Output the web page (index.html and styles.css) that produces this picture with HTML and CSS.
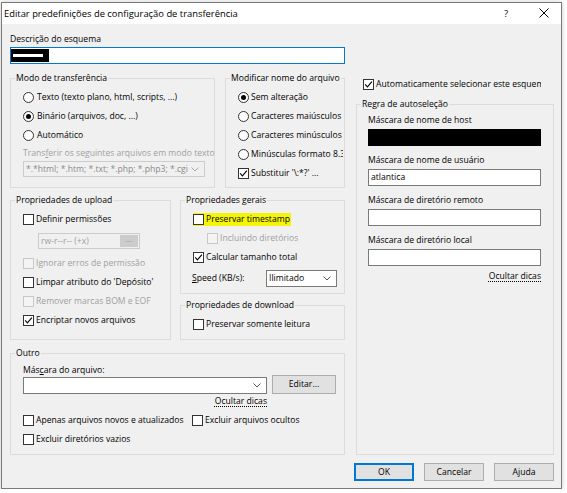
FILE: index.html
```html
<!DOCTYPE html>
<html lang="pt-BR">
<head>
<meta charset="utf-8">
<title>Editar predefinições de configuração de transferência</title>
<link rel="stylesheet" href="styles.css">
</head>
<body>
<div class="window">
  <div class="titlebar">
    <span class="title">Editar predefinições de configuração de transferência</span>
    <span class="help">?</span>
    <svg class="close" width="10" height="10" viewBox="0 0 10 10"><path d="M0.5 0.5L9.5 9.5M9.5 0.5L0.5 9.5" stroke="#000" stroke-width="1" fill="none"/></svg>
  </div>
  <div class="client">
    <div class="main">
      <div class="left">
        <div class="lbl">Descrição do esquema</div>
        <div class="field focus"><span class="redact"><span class="redact-bar"></span></span></div>

        <div class="row1">
          <fieldset class="grp modo">
            <legend>Modo de transferência</legend>
            <div class="gb">
              <div class="opt"><span class="radio"></span>Texto (texto plano, html, scripts, ...)</div>
              <div class="opt"><span class="radio on"></span>Binário (arquivos, doc, ...)</div>
              <div class="opt"><span class="radio"></span>Automático</div>
              <div class="lbl dis sub">Trans<u>f</u>erir os seguintes arquivos em modo texto</div>
              <div class="combo dis">
                <span class="ctext">*.*html; *.htm; *.txt; *.php; *.php3; *.cgi; *.c; *.cpp</span>
                <svg class="chev" width="8" height="5" viewBox="0 0 8 5"><polyline points="0.5,0.5 4,4 7.5,0.5" fill="none" stroke="#a8a8a8" stroke-width="1"/></svg>
              </div>
            </div>
          </fieldset>
          <fieldset class="grp nome">
            <legend>Modificar nome do arquivo</legend>
            <div class="gb">
              <div class="opt"><span class="radio on"></span>Sem alteração</div>
              <div class="opt"><span class="radio"></span>Caracteres maiúsculos</div>
              <div class="opt"><span class="radio"></span>Caracteres minúsculos</div>
              <div class="opt"><span class="radio"></span>Minúsculas formato 8.3</div>
              <div class="opt"><span class="cb"><svg width="9" height="9" viewBox="0 0 9 9"><polyline points="1.2,4.4 3.4,6.8 7.9,1.6" fill="none" stroke="#000" stroke-width="1.1"/></svg></span>Substituir '\:*?' ...</div>
            </div>
          </fieldset>
        </div>

        <div class="row2">
          <fieldset class="grp upload">
            <legend>Propriedades de upload</legend>
            <div class="gb">
              <div class="opt"><span class="cb"></span>Definir permissões</div>
              <div class="perm"><span class="ptext">rw-r--r-- (+x)</span><span class="dots">...</span></div>
              <div class="opt dis first-after"><span class="cb dis"></span>Ignorar erros de permissão</div>
              <div class="opt"><span class="cb"></span>Limpar atributo do 'Depósito'</div>
              <div class="opt dis"><span class="cb dis"></span>Remover marcas BOM e EOF</div>
              <div class="opt"><span class="cb"><svg width="9" height="9" viewBox="0 0 9 9"><polyline points="1.2,4.4 3.4,6.8 7.9,1.6" fill="none" stroke="#000" stroke-width="1.1"/></svg></span>Encriptar novos arquivos</div>
            </div>
          </fieldset>
          <div class="col2">
            <fieldset class="grp gerais">
              <legend>Propriedades gerais</legend>
              <div class="gb">
                <div class="opt"><span class="hl"><span class="cb"></span>Preservar timestamp</span></div>
                <div class="opt dis indent"><span class="cb dis"></span>Incluindo diretórios</div>
                <div class="opt"><span class="cb"><svg width="9" height="9" viewBox="0 0 9 9"><polyline points="1.2,4.4 3.4,6.8 7.9,1.6" fill="none" stroke="#000" stroke-width="1.1"/></svg></span>Calcular tamanho total</div>
                <div class="speedrow">
                  <span class="sl"><u>S</u>peed (KB/s):</span>
                  <span class="sel"><span class="ctext">Ilimitado</span><svg class="chev" width="8" height="5" viewBox="0 0 8 5"><polyline points="0.5,0.5 4,4 7.5,0.5" fill="none" stroke="#555" stroke-width="1"/></svg></span>
                </div>
              </div>
            </fieldset>
            <fieldset class="grp download">
              <legend>Propriedades de download</legend>
              <div class="gb">
                <div class="opt"><span class="cb"></span>Preservar somente leitura</div>
              </div>
            </fieldset>
          </div>
        </div>

        <fieldset class="grp outro">
          <legend>Outro</legend>
          <div class="gb">
            <div class="lbl">Más<u>c</u>ara do arquivo:</div>
            <div class="comborow">
              <span class="combo2"><svg class="chev" width="8" height="5" viewBox="0 0 8 5"><polyline points="0.5,0.5 4,4 7.5,0.5" fill="none" stroke="#555" stroke-width="1"/></svg></span>
              <span class="btn edit">Editar...</span>
            </div>
            <div class="hint"><span>Ocultar dicas</span></div>
            <div class="checks">
              <div class="opt"><span class="cb"></span>Apenas arquivos novos e atualizados</div>
              <div class="opt"><span class="cb"></span>Excluir arquivos ocultos</div>
              <div class="opt"><span class="cb"></span>Excluir diretórios vazios</div>
            </div>
          </div>
        </fieldset>
      </div>

      <div class="right">
        <div class="opt autorow"><span class="cb"><svg width="9" height="9" viewBox="0 0 9 9"><polyline points="1.2,4.4 3.4,6.8 7.9,1.6" fill="none" stroke="#000" stroke-width="1.1"/></svg></span>Automaticamente selecionar este esquema</div>
        <fieldset class="grp regra">
          <legend>Regra de autoseleção</legend>
          <div class="gb">
            <div class="lbl">Máscara de nome de host</div>
            <div class="field black"></div>
            <div class="lbl gap">Máscara de nome de usuário</div>
            <div class="field"><span class="val">atlantica</span></div>
            <div class="lbl gap">Máscara de diretório remoto</div>
            <div class="field"></div>
            <div class="lbl gap">Máscara de diretório local</div>
            <div class="field"></div>
            <div class="hint hint-r"><span>Ocultar dicas</span></div>
          </div>
        </fieldset>
      </div>
    </div>

    <div class="footer">
      <span class="btn ok">OK</span>
      <span class="btn">Cancelar</span>
      <span class="btn">Ajuda</span>
    </div>
  </div>
</div>
</body>
</html>
```

FILE: styles.css
```css
* { box-sizing: border-box; }
html, body { margin: 0; padding: 0; }
body {
  background: #ffffff;
  font-family: "Open Sans", "Noto Sans", sans-serif;
  font-size: 8.6px;
  line-height: 13px;
  color: #000;
}
u { text-decoration-thickness: 1px; text-underline-offset: 1px; }

.window {
  margin: 2px 0 0 1px;
  width: 561px;
  border: 1px solid #7a7a7a;
  background: #f0f0f0;
  box-shadow: 0 0 5px rgba(0, 0, 0, 0.22);
}
.titlebar {
  height: 21px;
  background: #fff;
  display: flex;
  align-items: center;
  padding: 0 0 1px 2px;
}
.title { flex: 1; font-size: 9.4px; white-space: nowrap; }
.help { width: 14px; text-align: center; font-size: 9.5px; margin-right: 26px; }
.close { flex: none; margin-right: 12px; }

.client { padding: 9px 7px 7px 8px; }
.main { display: grid; grid-template-columns: 335px 198px; column-gap: 11px; }
.left { display: flex; flex-direction: column; }
.right { display: flex; flex-direction: column; padding-top: 42px; }

.lbl { height: 13px; white-space: nowrap; }
.dis { color: #a0a0a0; }
.field {
  height: 17px;
  background: #fff;
  border: 1px solid #7a7a7a;
  display: flex;
  align-items: center;
}
.field.focus { border-color: #0078d7; margin-top: 1px; }
.field.black { background: #000; border-color: #000; }
.val { padding-left: 2px; }
.redact {
  width: 38px;
  height: 13px;
  background: #000;
  display: flex;
  align-items: center;
  padding-left: 2px;
}
.redact-bar { width: 30px; height: 3px; background: #fff; }

fieldset { margin: 0; padding: 0; min-width: 0; }
.grp { border: 1px solid #dcdcdc; }
.grp > legend {
  padding: 0 1px;
  margin-left: 4px;
  line-height: 13px;
  white-space: nowrap;
}

.opt {
  display: flex;
  align-items: center;
  height: 19px;
  white-space: nowrap;
  overflow: hidden;
}
.radio {
  flex: none;
  width: 11px;
  height: 11px;
  border: 1px solid #333;
  border-radius: 50%;
  background: #fff;
  margin-right: 3px;
  display: flex;
  align-items: center;
  justify-content: center;
}
.radio.on::after {
  content: "";
  width: 5px;
  height: 5px;
  border-radius: 50%;
  background: #000;
}
.cb {
  flex: none;
  width: 11px;
  height: 11px;
  border: 1px solid #333;
  background: #fff;
  margin-right: 2px;
  display: flex;
  align-items: center;
  justify-content: center;
}
.cb.dis { border-color: #c8c8c8; background: #f4f4f4; }

.row1 { display: flex; gap: 10px; margin-top: 8px; }
.modo { width: 205px; }
.nome { width: 120px; }
.modo .gb { padding: 3px 8px 10px 12px; }
.nome .gb { padding: 3px 1px 4px 12px; }
.nome .radio { margin-right: 2px; }
.sub { margin-top: 2px; }
.combo {
  margin-top: 1px;
  width: 182px;
  height: 16px;
  border: 1px solid #cccccc;
  background: #f0f0f0;
  display: flex;
  align-items: center;
  color: #8a8a8a;
}
.ctext { flex: 1; overflow: hidden; white-space: nowrap; padding-left: 2px; }
.chev { flex: none; margin: 0 5px 0 3px; }

.row2 { display: flex; gap: 9px; margin-top: 6px; }
.upload { width: 161px; }
.upload .gb { padding: 3px 4px 9px 12px; }
.perm {
  margin: 4px 0 0 15px;
  width: 102px;
  height: 16px;
  border: 1px solid #cccccc;
  background: #f0f0f0;
  display: flex;
  align-items: center;
  color: #a0a0a0;
}
.ptext { flex: 1; padding-left: 2px; white-space: nowrap; }
.dots {
  width: 18px;
  height: 12px;
  margin-right: 1px;
  background: #cccccc;
  color: #9a9a9a;
  text-align: center;
  line-height: 9px;
}
.first-after { margin-top: 5px; }

.col2 { width: 165px; display: flex; flex-direction: column; }
.gerais .gb { padding: 3px 4px 5px 12px; }
.hl {
  display: flex;
  align-items: center;
  height: 13px;
  background: #f5f50a;
  margin-left: -3px;
  padding: 0 1px 0 3px;
}
.indent { padding-left: 14px; }
.speedrow { display: flex; align-items: center; height: 19px; margin-top: 2px; }
.sl { width: 74px; margin-left: -1px; white-space: nowrap; }
.sel {
  width: 71px;
  height: 17px;
  border: 1px solid #7a7a7a;
  background: #fff;
  display: flex;
  align-items: center;
}
.download { flex: 1; margin-top: 5px; }
.download .gb { padding: 3px 4px 5px 12px; }

.outro { margin-top: 7px; }
.outro .gb { padding: 4px 8px 5px 12px; }
.comborow { display: flex; align-items: flex-end; margin-top: -2px; }
.combo2 {
  width: 244px;
  height: 17px;
  border: 1px solid #7a7a7a;
  background: #fff;
  display: flex;
  align-items: center;
  justify-content: flex-end;
}
.combo2 .chev { margin-right: 5px; }
.btn {
  display: flex;
  align-items: center;
  justify-content: center;
  background: #e1e1e1;
  border: 1px solid #adadad;
  white-space: nowrap;
}
.edit { width: 64px; height: 19px; margin-left: 5px; }
.hint { width: 244px; height: 13px; text-align: right; margin-top: 1px; white-space: nowrap; }
.hint span { text-decoration: underline dotted; text-underline-offset: 2px; }
.checks { display: grid; grid-template-columns: 169px auto; margin-top: 3px; }

.autorow { margin-left: 7px; width: 178px; }
.regra { flex: 1; margin-top: 4px; }
.regra .gb { padding: 3px 0 0 11px; }
.regra .field { width: 173px; margin-top: 2px; }
.regra .gap { margin-top: 8px; }
.hint-r { width: 173px; margin-top: 4px; }

.footer { display: flex; justify-content: flex-end; gap: 10px; margin-top: 8px; }
.footer .btn { width: 60px; height: 18px; }
.btn.ok { border-color: #0078d7; box-shadow: inset 0 0 0 1px #0078d7; }
```
